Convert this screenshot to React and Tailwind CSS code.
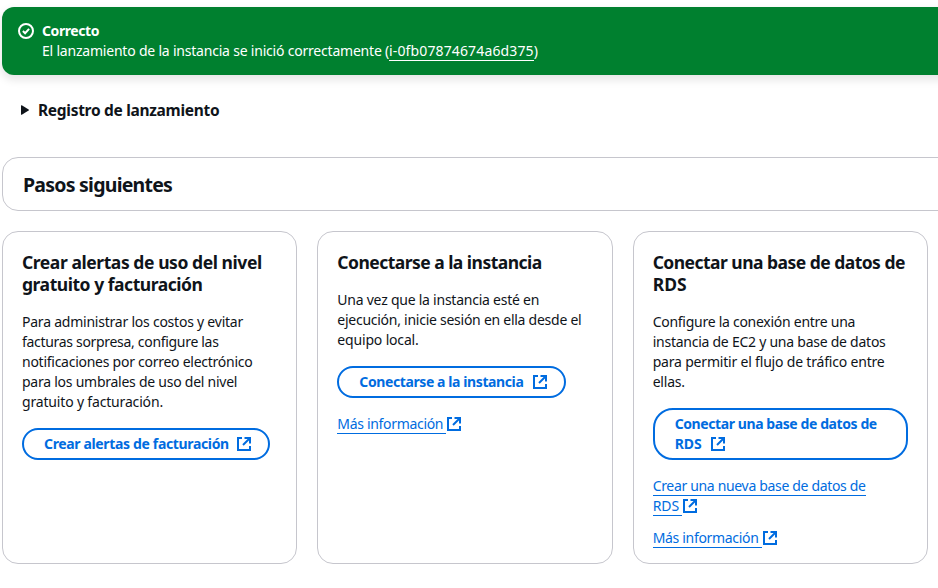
function ExternalIcon({ className = "" }) {
  return (
    <svg viewBox="0 0 16 16" fill="none" stroke="currentColor" strokeWidth="2" className={`inline-block h-4 w-4 shrink-0 ${className}`}>
      <path d="M8.5 2H14v5.5" />
      <path d="M7 9l6.5-6.5" />
      <path d="M14 10v4H2V2h4" />
    </svg>
  );
}

function Card({ children }) {
  return (
    <section className="h-[333px] min-w-0 flex-1 rounded-[16px] border border-[#c6c6cd] px-[19px] pt-[20px]">
      {children}
    </section>
  );
}

function Title({ children }) {
  return <h3 className="-mt-px mb-[17px] text-[17.5px] leading-[22px] font-bold">{children}</h3>;
}

function Line({ className, children }) {
  return <div className={`whitespace-nowrap ${className}`}>{children}</div>;
}

const button =
  "mt-4 flex h-8 items-center rounded-full border-2 border-[#006ce0] pl-5 font-bold whitespace-nowrap text-[#006ce0]";
const underlined = "h-5 border-b border-[#006ce0] whitespace-pre";

function MoreInfo({ className }) {
  return (
    <a className={`flex h-5 items-center text-[#006ce0] ${className}`}>
      <span className={`${underlined} w-[109px] tracking-[-0.32px]`}>Más información</span>
      <ExternalIcon />
    </a>
  );
}

export default function App() {
  return (
    <main className="h-[588px] w-[938px] overflow-hidden bg-white pt-[7px] pl-[2px] font-['Noto_Sans',sans-serif] text-[14px] leading-5 text-[#0f141a]">
      <div className="flex h-[68px] w-[960px] rounded-[12px] bg-[#00802f] pt-[14px] pl-4 text-white shadow-[0_4px_8px_1px_rgba(0,7,22,0.10)]">
        <svg viewBox="0 0 16 16" fill="none" stroke="currentColor" strokeWidth="2" className="mt-[2px] h-4 w-4">
          <circle cx="8" cy="8" r="7" />
          <path d="M4.9 8l2.2 2.2 4-4.4" />
        </svg>
        <div className="ml-2">
          <Line className="font-bold tracking-[-0.42px]">Correcto</Line>
          <div className="flex whitespace-nowrap">
            <span className="tracking-[-0.207px]">El lanzamiento de la instancia se inició correctamente (</span>
            <a className="h-5 border-b border-white tracking-[0.137px]">i-0fb07874674a6d375</a>
            <span>)</span>
          </div>
        </div>
      </div>

      <div className="mt-[23px] flex h-6 items-center pl-[19px]">
        <svg viewBox="0 0 8 10" className="h-[10px] w-2" fill="currentColor">
          <path d="M0 .8Q0 0 .8.3L7.6 4.4Q8.3 5 7.6 5.6L.8 9.7Q0 10 0 9.2z" />
        </svg>
        <h2 className="ml-[9px] text-[15.5px] font-bold tracking-[-0.3px] whitespace-nowrap">Registro de lanzamiento</h2>
      </div>

      <div className="mt-[35px] flex h-[54px] w-[960px] items-center rounded-[16px] border border-[#c6c6cd] pt-[2px] pl-[20px]">
        <h2 className="text-[19.5px] leading-6 font-bold tracking-[-0.76px] whitespace-nowrap">Pasos siguientes</h2>
      </div>

      <div className="mt-5 flex w-[926px] gap-5">
        <Card>
          <Title>
            <Line className="tracking-[-0.43px]">Crear alertas de uso del nivel</Line>
            <Line className="tracking-[-0.46px]">gratuito y facturación</Line>
          </Title>
          <Line className="tracking-[-0.23px]">Para administrar los costos y evitar</Line>
          <Line className="tracking-[-0.31px]">facturas sorpresa, configure las</Line>
          <Line className="tracking-[-0.26px]">notificaciones por correo electrónico</Line>
          <Line className="tracking-[-0.25px]">para los umbrales de uso del nivel</Line>
          <Line className="tracking-[-0.17px]">gratuito y facturación.</Line>
          <button className={`${button} w-[248px]`}>
            <span className="w-[192px] text-left tracking-[-0.35px]">Crear alertas de facturación</span>
            <ExternalIcon />
          </button>
        </Card>

        <Card>
          <Title>
            <Line className="tracking-[-0.53px]">Conectarse a la instancia</Line>
          </Title>
          <Line className="tracking-[-0.24px]">Una vez que la instancia esté en</Line>
          <Line className="tracking-[-0.26px]">ejecución, inicie sesión en ella desde el</Line>
          <Line className="tracking-[-0.17px]">equipo local.</Line>
          <button className={`${button} w-[229px]`}>
            <span className="w-[172.5px] text-left tracking-[-0.4px]">Conectarse a la instancia</span>
            <ExternalIcon />
          </button>
          <MoreInfo className="mt-4" />
        </Card>

        <Card>
          <Title>
            <Line className="tracking-[-0.53px]">Conectar una base de datos de</Line>
            <Line>RDS</Line>
          </Title>
          <Line className="tracking-[-0.27px]">Configure la conexión entre una</Line>
          <Line className="tracking-[-0.25px]">instancia de EC2 y una base de datos</Line>
          <Line className="tracking-[-0.19px]">para permitir el flujo de tráfico entre</Line>
          <Line className="tracking-[-0.2px]">ellas.</Line>
          <button className="mt-4 block h-[52px] w-full rounded-[20px] border-2 border-[#006ce0] px-5 py-1 text-left font-bold text-[#006ce0]">
            <Line className="tracking-[-0.41px]">Conectar una base de datos de</Line>
            <span className="flex items-center">
              <span className="w-[35px]">RDS</span>
              <ExternalIcon />
            </span>
          </button>
          <a className="mt-4 block text-[#006ce0]">
            <span className="flex h-5 items-center">
              <span className={`${underlined} tracking-[-0.33px]`}>Crear una nueva base de datos de</span>
            </span>
            <span className="flex h-5 items-center">
              <span className={`${underlined} w-[29.5px]`}>RDS</span>
              <ExternalIcon />
            </span>
          </a>
          <MoreInfo className="mt-3" />
        </Card>
      </div>
    </main>
  );
}
